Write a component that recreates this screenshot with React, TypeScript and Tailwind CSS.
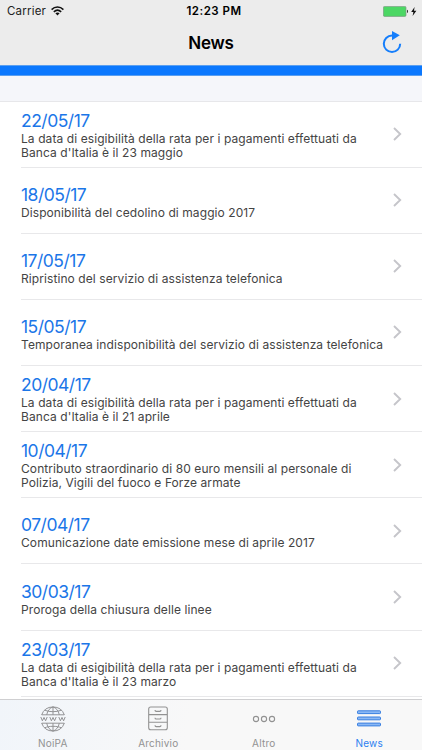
import type { ReactNode } from "react"

const news = [
  { date: "22/05/17", lines: ["La data di esigibilità della rata per i pagamenti effettuati da", "Banca d'Italia è il 23 maggio"] },
  { date: "18/05/17", lines: ["Disponibilità del cedolino di maggio 2017"] },
  { date: "17/05/17", lines: ["Ripristino del servizio di assistenza telefonica"] },
  { date: "15/05/17", lines: ["Temporanea indisponibilità del servizio di assistenza telefonica"] },
  { date: "20/04/17", lines: ["La data di esigibilità della rata per i pagamenti effettuati da", "Banca d'Italia è il 21 aprile"] },
  { date: "10/04/17", lines: ["Contributo straordinario di 80 euro mensili al personale di", "Polizia, Vigili del fuoco e Forze armate"] },
  { date: "07/04/17", lines: ["Comunicazione date emissione mese di aprile 2017"] },
  { date: "30/03/17", lines: ["Proroga della chiusura delle linee"] },
  { date: "23/03/17", lines: ["La data di esigibilità della rata per i pagamenti effettuati da", "Banca d'Italia è il 23 marzo"] },
]

function WifiIcon() {
  return (
    <svg className="w-[13px] h-[10px]" viewBox="0 0 13 10" fill="none" stroke="#111" strokeWidth="1.5">
      <path d="M0.6 3.6C4 0.2 9 0.2 12.4 3.6" />
      <path d="M2.8 5.9C5 3.8 8 3.8 10.2 5.9" />
      <path d="M6.5 9.4L4.4 7.3C5.6 6.2 7.4 6.2 8.6 7.3Z" fill="#111" stroke="none" />
    </svg>
  )
}

function BatteryIcon() {
  return (
    <svg className="w-[34px] h-[11px]" viewBox="0 0 34 11">
      <rect x="0.4" y="0.4" width="22.6" height="10" rx="1.2" fill="#4cd764" stroke="#7d9a82" strokeWidth="0.7" />
      <path d="M24 3.8C25.4 4 25.4 6.8 24 7Z" fill="#333" />
      <path d="M31.6 1L28.2 6H30.4L29.6 10L33.4 4.8H31Z" fill="#111" />
    </svg>
  )
}

function RefreshIcon() {
  return (
    <svg className="w-5 h-[23px]" viewBox="0 0 20 23" fill="none">
      <path d="M10 4.6A8.2 8.2 0 1 0 18.2 12.8" stroke="#157efb" strokeWidth="2" />
      <path d="M10 0L17.8 4.2L10 9.2Z" fill="#157efb" />
    </svg>
  )
}

function Chevron() {
  return (
    <svg className="w-[9px] h-[14px] shrink-0" viewBox="0 0 9 14" fill="none" stroke="#c5c5ca" strokeWidth="1.9">
      <path d="M1 1L7.2 7L1 13" />
    </svg>
  )
}

function GlobeIcon() {
  return (
    <svg className="w-[26px] h-[26px]" viewBox="0 0 26 26" fill="none" stroke="#8e8e90" strokeWidth="0.95">
      <path d="M1.6 9A12.1 12.1 0 0 1 24.4 9M1.6 17A12.1 12.1 0 0 0 24.4 17" />
      <path d="M1.8 8.8H24.2M1.8 17.2H24.2M13 0.9V8.8M13 17.2V25.1" />
      <path d="M6.7 8.8C7.5 4.5 10 1.8 13 0.9C16 1.8 18.5 4.5 19.3 8.8M6.7 17.2C7.5 21.5 10 24.2 13 25.1C16 24.2 18.5 21.5 19.3 17.2" />
      <path d="M4.7 4.2C9 6.2 17 6.2 21.3 4.2M4.7 21.8C9 19.8 17 19.8 21.3 21.8" />
      <path d="M0.8 11L2.4 14.8L4 11.4L5.6 14.8L7.2 11M9.8 11L11.4 14.8L13 11.4L14.6 14.8L16.2 11M18.8 11L20.4 14.8L22 11.4L23.6 14.8L25.2 11" />
    </svg>
  )
}

function CabinetIcon() {
  return (
    <svg className="w-5 h-[25px]" viewBox="0 0 20 25" fill="none" stroke="#929292" strokeWidth="1.1">
      <rect x="0.7" y="1" width="18.6" height="22.8" rx="2" />
      <path d="M1 8.6H19M1 16.2H19" />
      <path d="M7 4.1C7 5.2 7.4 5.4 8.2 5.4H11.8C12.6 5.4 13 5.2 13 4.1M7 11.7C7 12.8 7.4 13 8.2 13H11.8C12.6 13 13 12.8 13 11.7M7 19.3C7 20.4 7.4 20.6 8.2 20.6H11.8C12.6 20.6 13 20.4 13 19.3" />
    </svg>
  )
}

function DotsIcon() {
  return (
    <svg className="w-6 h-[8px]" viewBox="0 0 24 8" fill="none" stroke="#929292" strokeWidth="1.1">
      <circle cx="4" cy="4" r="2.6" />
      <circle cx="12" cy="4" r="2.6" />
      <circle cx="20" cy="4" r="2.6" />
    </svg>
  )
}

function BarsIcon() {
  return (
    <svg className="w-6 h-[17px]" viewBox="0 0 24 17" fill="#8ab8f5" stroke="#397fe0" strokeWidth="1">
      <rect x="0.5" y="0.8" width="23" height="2.8" rx="0.7" />
      <rect x="0.5" y="7" width="23" height="2.8" rx="0.7" />
      <rect x="0.5" y="13.1" width="23" height="2.8" rx="0.7" />
    </svg>
  )
}

function Tab({ label, active, children }: { label: string; active?: boolean; children: ReactNode }) {
  return (
    <div className={`flex flex-1 flex-col items-center ${active ? "text-[#2b7ff0]" : "text-[#929292]"}`}>
      <div className="flex h-[37px] items-center justify-center">{children}</div>
      <span className="text-[10px] leading-3 tracking-[0.2px]">{label}</span>
    </div>
  )
}

export default function App() {
  return (
    <div className="flex h-[750px] w-[422px] flex-col overflow-hidden bg-white font-['Inter','Liberation_Sans',sans-serif]">
      <header className="h-[65px] shrink-0 bg-[#ececec] text-black">
        <div className="grid h-[22px] grid-cols-3 items-center pl-[7px] pr-[5px]">
          <div className="flex items-center gap-[5px] text-[11.5px] tracking-[0.2px] text-[#222]">
            <span className="pt-px">Carrier</span>
            <WifiIcon />
          </div>
          <div className="pl-1 pt-px text-center text-[11.5px] font-semibold tracking-[0.5px]">12:23 PM</div>
          <div className="flex justify-end">
            <BatteryIcon />
          </div>
        </div>
        <div className="grid h-[43px] grid-cols-3 items-center pr-5">
          <span />
          <h1 className="pl-5 text-center text-[17px] font-semibold tracking-[-0.2px]">News</h1>
          <div className="flex justify-end pb-0.5">
            <RefreshIcon />
          </div>
        </div>
      </header>
      <div className="h-[11px] shrink-0 border-y border-[#5a9ff0] bg-[#0b78fe]" />
      <div className="h-[25.5px] shrink-0 border-b border-[#e7e7ea] bg-[#f5f6fa]" />

      <main className="h-[597.5px] shrink-0 overflow-hidden pl-[21px]">
        {news.map((item) => (
          <div
            key={item.date}
            className="flex h-[66.15px] items-center justify-between border-b border-[#e8e8ea] pr-5"
          >
            <div className={item.lines.length === 1 ? "pt-[3px]" : "pt-px"}>
              <div className="text-[17.5px] leading-[22px] tracking-[-0.5px] text-[#1b76e8]">{item.date}</div>
              {item.lines.map((line) => (
                <p key={line} className="whitespace-nowrap text-[12px] leading-[14px] tracking-[0.085px] text-[#444]">
                  {line}
                </p>
              ))}
            </div>
            <Chevron />
          </div>
        ))}
      </main>

      <nav className="flex h-[51px] shrink-0 border-t border-[#cfcfd1] bg-[linear-gradient(100deg,#f1f5fa,#f8f8f8_45%)]">
        <Tab label="NoiPA">
          <GlobeIcon />
        </Tab>
        <Tab label="Archivio">
          <CabinetIcon />
        </Tab>
        <Tab label="Altro">
          <DotsIcon />
        </Tab>
        <Tab label="News" active>
          <BarsIcon />
        </Tab>
      </nav>
    </div>
  )
}
